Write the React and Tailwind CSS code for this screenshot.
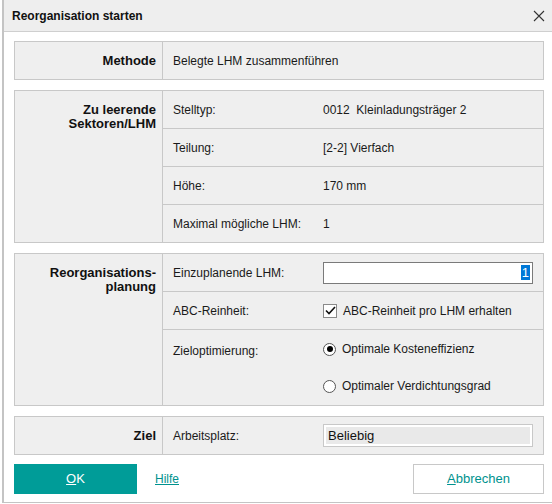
import { useState } from "react"

const Row = ({ label, children, last, tall }) => (
    <div
        className={
            "flex px-[10px] " +
            (tall ? "h-[75px] items-start pt-[12px] " : last ? "h-[37px] items-center " : "h-[38px] items-center ") +
            (last ? "" : "border-b border-[#c8c8c8]")
        }
    >
        <div className={children ? "w-[150px] shrink-0" : "whitespace-nowrap"}>{label}</div>
        {children && <div className="flex-1">{children}</div>}
    </div>
)

const Section = ({ title, children }) => (
    <div className="w-[530px] flex border border-[#c8c8c8] bg-[#efefef]">
        <div className="w-[148px] shrink-0 border-r border-[#c8c8c8] pr-[6px] pt-[12px] text-right font-bold text-[13px] leading-[14px] text-[#111]">
            {title}
        </div>
        <div className="flex-1 flex flex-col">{children}</div>
    </div>
)

const Radio = ({ checked, label }) => (
    <div className="flex items-center gap-[6px] leading-[14px]">
        <span className="w-[13px] h-[13px] rounded-full border border-[#555] bg-white flex items-center justify-center">
            {checked && <span className="w-[6px] h-[6px] rounded-full bg-black" />}
        </span>
        <span>{label}</span>
    </div>
)

const App = () => {
    const [abc, setAbc] = useState(true)
    const [opt, setOpt] = useState("kosten")

    return (
        <div className="w-[552px] h-[504px] bg-white overflow-hidden font-['Liberation_Sans',Arial,sans-serif] text-[12px] text-[#1a1a1a]">
            <div className="h-[503px] ml-[2px] border-l-2 border-b border-[#c4c4c4] flex flex-col">
                <div className="h-[32px] shrink-0 border-b border-[#cfcfcf] bg-[#eeeeee] flex items-center justify-between pl-[8px] pr-[6px]">
                    <span className="font-bold text-[12px] text-[#111]">
                        Reorganisation starten
                    </span>
                    <svg width="12" height="12" viewBox="0 0 12 12" className="mr-[1px]">
                        <path d="M1 1 L11 11 M11 1 L1 11" stroke="#333" strokeWidth="1.1" />
                    </svg>
                </div>

                <div className="pl-[10px] pt-[9px] flex flex-col gap-[10px]">
                    <Section title="Methode">
                        <Row last label="Belegte LHM zusammenführen" />
                    </Section>

                    <Section title={<>Zu leerende<br />Sektoren/LHM</>}>
                        <Row label="Stelltyp:">0012&nbsp; Kleinladungsträger 2</Row>
                        <Row label="Teilung:">[2-2] Vierfach</Row>
                        <Row label="Höhe:">170 mm</Row>
                        <Row last label="Maximal mögliche LHM:">1</Row>
                    </Section>

                    <Section title={<>Reorganisations-<br />planung</>}>
                        <Row label="Einzuplanende LHM:">
                            <div className="w-[210px] h-[22px] border border-[#7a7a7a] bg-white flex items-center justify-end pr-[2px]">
                                <span className="bg-[#0078d7] text-white px-[1px] leading-[15px] text-[13px]">1</span>
                            </div>
                        </Row>
                        <Row label="ABC-Reinheit:">
                            <label className="flex items-center gap-[6px]" onClick={() => setAbc(!abc)}>
                                <span className="w-[14px] h-[14px] border border-[#8a8a8a] bg-white flex items-center justify-center">
                                    {abc && (
                                        <svg width="11" height="11" viewBox="0 0 11 11">
                                            <path d="M1 5.5 L4 8.5 L10 2" stroke="#111" strokeWidth="1.6" fill="none" />
                                        </svg>
                                    )}
                                </span>
                                <span>ABC-Reinheit pro LHM erhalten</span>
                            </label>
                        </Row>
                        <Row last tall label="Zieloptimierung:">
                            <div className="flex flex-col gap-[23px]">
                                <div onClick={() => setOpt("kosten")}>
                                    <Radio checked={opt === "kosten"} label="Optimale Kosteneffizienz" />
                                </div>
                                <div onClick={() => setOpt("verd")}>
                                    <Radio checked={opt === "verd"} label="Optimaler Verdichtungsgrad" />
                                </div>
                            </div>
                        </Row>
                    </Section>

                    <Section title="Ziel">
                        <Row last label="Arbeitsplatz:">
                            <div className="w-[210px] h-[23px] border border-[#c8c8c8] bg-white p-[2px]">
                                <div className="h-full bg-[#e9e9e9] flex items-center pl-[2px] text-[13px] text-[#111]">
                                    Beliebig
                                </div>
                            </div>
                        </Row>
                    </Section>

                    <div className="w-[530px] -mt-[1px] flex items-center">
                        <button className="w-[123px] h-[30px] bg-[#009c98] text-white text-[13px]">
                            <span className="underline">O</span>K
                        </button>
                        <a className="ml-[18px] text-[#00928e] underline text-[12px]">Hilfe</a>
                        <button className="ml-auto w-[131px] h-[30px] bg-white border border-[#c8c8c8] text-[#00928e] text-[13px]">
                            <span className="underline">A</span>bbrechen
                        </button>
                    </div>
                </div>
            </div>
        </div>
    )
}

export default App
